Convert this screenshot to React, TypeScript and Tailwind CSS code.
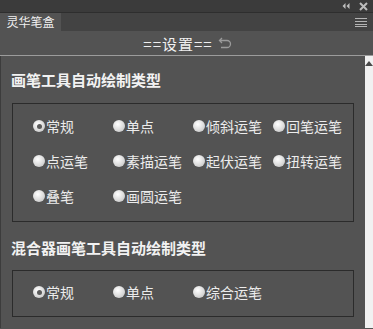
import type { ReactNode } from 'react';

const FONT = { fontFamily: '"Noto Sans CJK SC", "Noto Sans", sans-serif' };

function Radio({ label, checked = false }: { label: string; checked?: boolean }) {
  return (
    <div className="flex items-center h-[20px]">
      <span className="flex h-[12px] w-[12px] shrink-0 items-center justify-center rounded-full bg-[radial-gradient(circle_at_40%_35%,#ffffff,#bdbdbd)]">
        {checked && <span className="h-[5px] w-[5px] rounded-full bg-[#5a5a5a]" />}
      </span>
      <span className="ml-[1px] whitespace-nowrap text-[14px] leading-none text-[#ececec]">{label}</span>
    </div>
  );
}

function Group({ children, rows }: { children: ReactNode; rows: string }) {
  return (
    <div className={`mx-[11px] border border-[#2b2b2b] pl-[20px] ${rows}`}>
      <div className="grid grid-cols-[80px_80px_80px_80px] gap-y-[15px]">{children}</div>
    </div>
  );
}

export default function App() {
  return (
    <div className="h-[329px] w-[373px] overflow-hidden bg-[#535353] select-none" style={FONT}>
      {/* title strip */}
      <div className="flex h-[13px] items-center justify-end gap-[9px] border-b border-[#2e2e2e] bg-[#3b3b3b] pr-[5px]">
        <svg width="8" height="6" viewBox="0 0 8 6">
          <path d="M3.5 0 L0.5 3 L3.5 6 Z M7.5 0 L4.5 3 L7.5 6 Z" fill="#bdbdbd" />
        </svg>
        <svg width="9" height="9" viewBox="0 0 9 9">
          <path d="M1 1 L8 8 M8 1 L1 8" stroke="#bdbdbd" strokeWidth="2" />
        </svg>
      </div>
      {/* tab row */}
      <div className="flex h-[18px] items-stretch bg-[#434343]">
        <div className="flex w-[61px] items-center justify-center bg-[#535353] text-[12px] leading-none text-[#f0f0f0]">
          灵华笔盒
        </div>
        <div className="flex flex-1 items-center justify-end pr-[6px]">
          <svg width="12" height="9" viewBox="0 0 12 9">
            <path d="M0 0.5 H12 M0 3.5 H12 M0 6.5 H12 M0 8.5 H12" stroke="#b4b4b4" strokeWidth="1" />
          </svg>
        </div>
      </div>
      {/* header */}
      <div className="flex h-[25px] items-center justify-center border-b border-[#9c9c9c] pl-[2px]">
        <span className="text-[15px] leading-none tracking-[1px] text-[#f0f0f0]">==设置==</span>
        <svg className="ml-[5px]" width="14" height="14" viewBox="0 0 14 14">
          <path d="M4 2 L1.5 4.5 L4 7 M1.5 4.5 H9 A3.5 3.5 0 0 1 9 11.5 H3" fill="none" stroke="#9a9a9a" strokeWidth="1.3" />
        </svg>
      </div>
      {/* body + scrollbar */}
      <div className="flex h-[272px]">
        <div className="flex-1 border-l border-[#3c3c3c]">
          <div className="pt-[16px] pl-[10px] text-[15px] font-bold leading-none text-[#f2f2f2]">画笔工具自动绘制类型</div>
          <div className="mt-[16px]">
            <Group rows="pt-[12px] pb-[15px]">
              <Radio label="常规" checked />
              <Radio label="单点" />
              <Radio label="倾斜运笔" />
              <Radio label="回笔运笔" />
              <Radio label="点运笔" />
              <Radio label="素描运笔" />
              <Radio label="起伏运笔" />
              <Radio label="扭转运笔" />
              <Radio label="叠笔" />
              <Radio label="画圆运笔" />
            </Group>
          </div>
          <div className="pt-[18px] pl-[10px] text-[15px] font-bold leading-none text-[#f2f2f2]">混合器画笔工具自动绘制类型</div>
          <div className="mt-[15px]">
            <Group rows="pt-[11px] pb-[14px]">
              <Radio label="常规" checked />
              <Radio label="单点" />
              <Radio label="综合运笔" />
            </Group>
          </div>
        </div>
        <div className="flex w-[17px] justify-center border-r border-[#2e2e2e] bg-[#f1f1f1] pt-[5px]">
          <svg width="8" height="5" viewBox="0 0 8 5">
            <path d="M4 0 L8 5 H0 Z" fill="#4a4a4a" />
          </svg>
        </div>
      </div>
    </div>
  );
}
